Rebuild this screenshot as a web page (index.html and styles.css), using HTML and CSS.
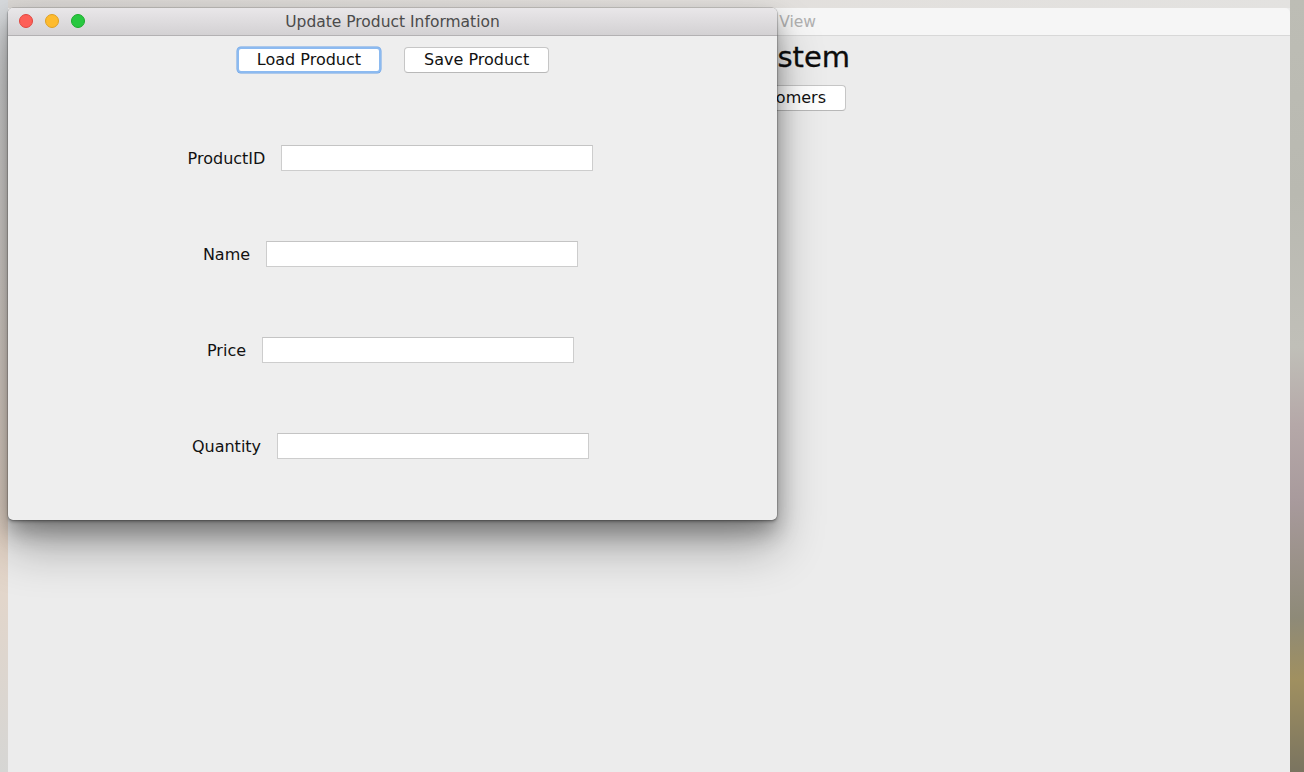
FILE: index.html
```html
<!DOCTYPE html>
<html>
<head>
<meta charset="utf-8">
<link rel="stylesheet" href="styles.css">
</head>
<body>
<div class="desktop">
  <div class="wallpaper-top"></div>
  <div class="wallpaper-left"></div>
  <div class="wallpaper-right"></div>

  <div class="window back-window">
    <div class="titlebar back-titlebar">
      <span class="back-title">Main View</span>
    </div>
    <div class="back-content">
      <div class="back-heading-row">
        <h1 class="back-heading">Management System</h1>
      </div>
      <div class="back-button-row">
        <button class="mac-btn back-btn">View Customers</button>
      </div>
    </div>
  </div>

  <div class="window front-window">
    <div class="titlebar front-titlebar">
      <div class="lights">
        <span class="light red"></span>
        <span class="light yellow"></span>
        <span class="light green"></span>
      </div>
      <span class="front-title">Update Product Information</span>
    </div>
    <div class="front-content">
      <div class="button-row">
        <button class="mac-btn focused">Load Product</button>
        <button class="mac-btn">Save Product</button>
      </div>
      <div class="field-row first">
        <label class="field-label">ProductID</label>
        <div class="text-field"></div>
      </div>
      <div class="field-row">
        <label class="field-label">Name</label>
        <div class="text-field"></div>
      </div>
      <div class="field-row">
        <label class="field-label">Price</label>
        <div class="text-field"></div>
      </div>
      <div class="field-row">
        <label class="field-label">Quantity</label>
        <div class="text-field"></div>
      </div>
    </div>
  </div>
</div>
</body>
</html>
```

FILE: styles.css
```css
* { box-sizing: border-box; }

html, body {
  margin: 0;
  padding: 0;
  width: 1304px;
  height: 772px;
  overflow: hidden;
  font-family: "DejaVu Sans", "Liberation Sans", sans-serif;
}

.desktop {
  position: relative;
  width: 1304px;
  height: 772px;
  background: #ececec;
}

.wallpaper-top {
  position: absolute;
  left: 0; top: 0;
  width: 1304px; height: 8px;
  background: linear-gradient(90deg, #d9d6d3 0%, #e2dfdc 50%, #e3e2e0 100%);
}

.wallpaper-left {
  position: absolute;
  left: 0; top: 0;
  width: 8px; height: 772px;
  background: linear-gradient(180deg, #d6d9dc 0%, #dcd8d4 30%, #e6d6c8 70%, #d6d6d4 100%);
}

.wallpaper-right {
  position: absolute;
  right: 0; top: 0;
  width: 14px; height: 772px;
  background: linear-gradient(180deg, #bdbdb5 0%, #b9b9b1 25%, #c0bfb8 45%, #b5a8a8 55%, #a89a9c 65%, #8e8a78 80%, #a09060 88%, #7a7460 100%);
}

.window {
  position: absolute;
}

/* Back (inactive) window */
.back-window {
  left: 8px;
  top: 8px;
  width: 1282px;
  height: 764px;
  background: #ececec;
  border-radius: 5px 5px 0 0;
  overflow: hidden;
}

.back-titlebar {
  height: 28px;
  background: #f6f6f6;
  border-bottom: 1px solid #d8d8d8;
  display: flex;
  align-items: center;
  justify-content: flex-end;
  padding-right: 474px;
}

.back-title {
  font-size: 15.5px;
  color: #b0b0b0;
  white-space: nowrap;
}

.back-content {
  display: flex;
  flex-direction: column;
}

.back-heading-row {
  display: flex;
  justify-content: flex-end;
  padding-right: 440px;
  padding-top: 4px;
}

.back-heading {
  margin: 0;
  font-size: 29px;
  font-weight: normal;
  color: #0d0d0d;
  line-height: 34px;
  white-space: nowrap;
  -webkit-text-stroke: 0.3px #0d0d0d;
}

.back-button-row {
  display: flex;
  justify-content: flex-end;
  padding-right: 444px;
  padding-top: 11px;
}

.back-btn {
  padding: 0 20px;
}

/* Front window */
.front-window {
  left: 8px;
  top: 8px;
  width: 769px;
  height: 512px;
  background: #eeeeee;
  border-radius: 5px;
  box-shadow: 0 0 0 0.5px rgba(0,0,0,0.25), 0 2px 3px rgba(0,0,0,0.28), 0 12px 22px rgba(0,0,0,0.3), 0 28px 48px rgba(0,0,0,0.3);
  overflow: hidden;
}

.front-titlebar {
  position: relative;
  height: 28px;
  background: linear-gradient(180deg, #e9e7e9 0%, #dedcde 50%, #d3d1d3 100%);
  border-bottom: 1px solid #b3b1b3;
  display: flex;
  align-items: center;
  justify-content: center;
}

.lights {
  position: absolute;
  left: 11px;
  top: 6px;
  display: flex;
  gap: 12px;
}

.light {
  width: 14px;
  height: 14px;
  border-radius: 50%;
  display: block;
}
.light.red { background: #fd5f57; border: 1px solid #e1463f; }
.light.yellow { background: #febb2e; border: 1px solid #dfa022; }
.light.green { background: #28c840; border: 1px solid #1cac2c; }

.front-title {
  font-size: 15.5px;
  color: #4b4b4b;
  white-space: nowrap;
  padding-top: 1px;
}

.front-content {
  display: flex;
  flex-direction: column;
  align-items: center;
  padding-top: 11px;
  padding-left: 1px;
}

.button-row {
  display: flex;
  gap: 23px;
  height: 26px;
}

.mac-btn {
  font-family: "DejaVu Sans", "Liberation Sans", sans-serif;
  font-size: 16px;
  color: #111;
  background: #ffffff;
  border: 1px solid #c6c6c6;
  border-bottom-color: #b8b8b8;
  border-radius: 4px;
  height: 26px;
  padding: 0 19px;
  line-height: 22px;
  margin: 0;
  white-space: nowrap;
}

.mac-btn.focused {
  border: 2px solid #8cbaf0;
  padding: 0 18px;
  box-shadow: 0 0 0 0.5px #6aa2e6;
}

.field-row {
  display: flex;
  align-items: center;
  gap: 16px;
  height: 26px;
  margin-top: 70px;
  padding-right: 5px;
}

.field-row.first {
  margin-top: 72px;
}

.field-label {
  font-size: 16px;
  color: #111;
  white-space: nowrap;
}

.text-field {
  width: 312px;
  height: 26px;
  background: #ffffff;
  border: 1px solid #cdcdcd;
  border-top-color: #c4c4c4;
}
```
